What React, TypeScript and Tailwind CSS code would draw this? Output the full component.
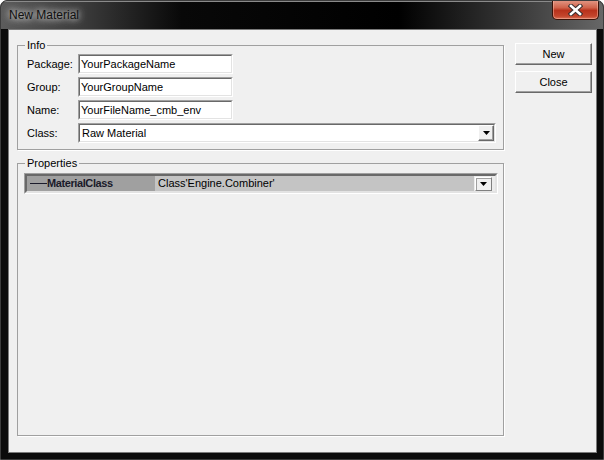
import React from 'react';

const Arrow = () => (
  <svg width="7" height="4" viewBox="0 0 7 4">
    <path d="M0 0H7L3.5 4Z" fill="#000" />
  </svg>
);

// classic sunken 3D frame (edit boxes, combo)
const Sunken = ({ className = '', children }: { className?: string; children: React.ReactNode }) => (
  <div className={`border border-[#a0a0a0] border-b-white border-r-white ${className}`}>
    <div className="h-full border border-[#696969] border-b-[#e3e3e3] border-r-[#e3e3e3] bg-white flex items-center">
      {children}
    </div>
  </div>
);

const Field = ({ label, value }: { label: string; value: string }) => (
  <div className="flex items-center h-[20px]">
    <span className="w-[51px]">{label}</span>
    <Sunken className="w-[155px] h-[20px]">
      <span className="pl-[1px] leading-[14px]">{value}</span>
    </Sunken>
  </div>
);

const Button = ({ label }: { label: string }) => (
  <button className="w-[77px] h-[22px] bg-[#f0f0f0] border border-t-white border-l-white border-b-[#696969] border-r-[#696969] shadow-[inset_-1px_-1px_0_#a0a0a0] text-[11px] leading-none">
    {label}
  </button>
);

const Group = ({ title, className = '', children }: { title: string; className?: string; children: React.ReactNode }) => (
  <fieldset className={`border border-[#a0a0a0] shadow-[1px_1px_0_#fff] flex flex-col ${className}`}>
    <legend className="ml-[7px] px-[2px] leading-[13px]">{title}</legend>
    {children}
  </fieldset>
);

export default function App() {
  return (
    <div className="w-[604px] h-[460px] overflow-hidden rounded-t-[7px] border border-[#3c3c3c] bg-[#0b0b0b] flex flex-col font-['Liberation_Sans',Arial,sans-serif] text-[11px] text-black">
      {/* TITLE BAR */}
      <div className="h-[28px] flex items-start shrink-0 bg-[linear-gradient(90deg,#5c5c5c_0%,#3a3a3a_14%,#080808_30%,#000_66%,#2e2e2e_82%,#676767_100%)] shadow-[inset_0_1px_0_#8a8a8a]">
        <span className="ml-[8px] mt-[7px] text-[12px] leading-[14px] text-[#101010] [text-shadow:0_0_6px_rgba(255,255,255,0.9),0_0_10px_rgba(220,220,220,0.8)]">
          New Material
        </span>
        <div className="ml-auto mr-[4px] w-[47px] h-[20px] -mt-px rounded-b-[5px] border border-t-0 border-[#3a1208] bg-[linear-gradient(180deg,#e39a88_0%,#d0644c_40%,#b8321c_55%,#c4452c_85%,#d8735a_100%)] shadow-[inset_0_0_0_1px_rgba(255,200,180,0.45)] flex items-center justify-center">
          <svg width="15" height="12" viewBox="0 0 15 12">
            <path d="M3 2L12 10M12 2L3 10" stroke="#3a2f2f" strokeWidth="4.6" strokeLinecap="square" />
            <path d="M3 2L12 10M12 2L3 10" stroke="#fff" strokeWidth="2.6" strokeLinecap="square" />
          </svg>
        </div>
      </div>

      {/* CLIENT */}
      <div className="flex-1 flex pl-[7px] pr-[6px] pb-[6px]">
        <div className="flex-1 flex gap-[11px] bg-[#f0f0f0] border border-[#7a7a7a] pl-[8px] pr-[4px] pt-[9px] pb-[16px]">
          {/* LEFT */}
          <div className="w-[487px] flex flex-col gap-[7px]">
            <Group title="Info">
              <div className="flex flex-col gap-[3px] pl-[9px] pr-[7px] pt-[2px] pb-[6px]">
                <Field label="Package:" value="YourPackageName" />
                <Field label="Group:" value="YourGroupName" />
                <Field label="Name:" value="YourFileName_cmb_env" />
                <div className="flex items-center h-[20px]">
                  <span className="w-[51px]">Class:</span>
                  <Sunken className="flex-1 h-[20px]">
                    <span className="flex-1 pl-[2px] leading-[14px]">Raw Material</span>
                    <div className="w-[16px] h-full bg-[#f0f0f0] border border-t-white border-l-white border-b-[#696969] border-r-[#696969] shadow-[inset_-1px_-1px_0_#a0a0a0] flex items-center justify-center">
                      <Arrow />
                    </div>
                  </Sunken>
                </div>
              </div>
            </Group>

            <Group title="Properties" className="flex-1">
              <div className="pl-[6px] pr-[5px] pt-[3px]">
                <div className="h-[21px] border border-[#a0a0a0] border-b-white border-r-white">
                  <div className="h-full border-2 border-[#696969] border-b-[#e3e3e3] border-r-[#e3e3e3] flex">
                    <div className="w-[128px] bg-[#a0a0a0] flex items-center pl-[3px]">
                      <span className="w-[17px] h-px bg-[#1c1c2c]" />
                      <span className="font-bold tracking-[-0.4px] text-[#1a1a2a]">MaterialClass</span>
                    </div>
                    <div className="flex-1 bg-[#c4c4c4] flex items-center pl-[3px]">
                      <span>Class'Engine.Combiner'</span>
                    </div>
                    <div className="w-[21px] bg-[#ececec] flex items-center pl-[1px]">
                      <div className="w-[17px] h-[14px] border border-t-white border-l-white border-b-[#808080] border-r-[#808080] shadow-[inset_1px_1px_0_#a0a0a0] bg-[#f0f0f0] flex items-center justify-center">
                        <Arrow />
                      </div>
                    </div>
                  </div>
                </div>
              </div>
            </Group>
          </div>

          {/* RIGHT */}
          <div className="w-[77px] flex flex-col gap-[6px] pt-[4px]">
            <Button label="New" />
            <Button label="Close" />
          </div>
        </div>
      </div>
    </div>
  );
}
